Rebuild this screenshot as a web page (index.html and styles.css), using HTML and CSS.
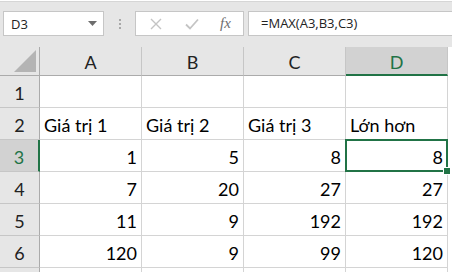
FILE: index.html
```html
<!DOCTYPE html>
<html lang="vi">
<head>
    <meta charset="UTF-8">
    <meta name="viewport" content="width=device-width, initial-scale=1.0">
    <title>MAX</title>
    <link rel="stylesheet" href="styles.css">
</head>
<body>
    <div class="toolbar">
        <div class="name-box">
            <span>D3</span>
            <svg class="drop" width="9" height="5" viewBox="0 0 9 5"><path d="M0 0h9L4.5 5z" fill="#6d6d6d"/></svg>
        </div>
        <div class="grip"><i></i><i></i><i></i></div>
        <div class="fx-box">
            <svg width="12" height="12" viewBox="0 0 12 12"><path d="M1 1l10 10M11 1L1 11" stroke="#c4c4c4" stroke-width="1.4" fill="none"/></svg>
            <svg width="14" height="12" viewBox="0 0 14 12"><path d="M1 6.5l4 4L13 1.5" stroke="#c4c4c4" stroke-width="1.8" fill="none"/></svg>
            <span class="fx">fx</span>
        </div>
        <div class="formula">=MAX(A3,B3,C3)</div>
    </div>

    <div class="sheet">
        <div class="corner"></div>
        <div class="col-head">A</div>
        <div class="col-head">B</div>
        <div class="col-head">C</div>
        <div class="col-head sel">D</div>

        <div class="row-head">1</div>
        <div class="cell"></div>
        <div class="cell"></div>
        <div class="cell"></div>
        <div class="cell"></div>

        <div class="row-head">2</div>
        <div class="cell">Giá trị 1</div>
        <div class="cell">Giá trị 2</div>
        <div class="cell">Giá trị 3</div>
        <div class="cell">Lớn hơn</div>

        <div class="row-head sel">3</div>
        <div class="cell num">1</div>
        <div class="cell num">5</div>
        <div class="cell num">8</div>
        <div class="cell num active">8</div>

        <div class="row-head">4</div>
        <div class="cell num">7</div>
        <div class="cell num">20</div>
        <div class="cell num">27</div>
        <div class="cell num">27</div>

        <div class="row-head">5</div>
        <div class="cell num">11</div>
        <div class="cell num">9</div>
        <div class="cell num">192</div>
        <div class="cell num">192</div>

        <div class="row-head">6</div>
        <div class="cell num">120</div>
        <div class="cell num">9</div>
        <div class="cell num">99</div>
        <div class="cell num">120</div>

        <div class="row-head tail"></div>
        <div class="cell tail"></div>
        <div class="cell tail"></div>
        <div class="cell tail"></div>
        <div class="cell tail"></div>
    </div>
</body>
</html>
```

FILE: styles.css
```css
body {
    margin: 0;
    background-color: #ffffff;
    overflow: hidden;
    width: 452px;
    height: 272px;
}

.toolbar {
    display: flex;
    align-items: flex-start;
    height: 46px;
    box-sizing: border-box;
    margin-top: 1px;
    padding-top: 9px;
    background-color: #e6e6e6;
    border-top: 1px solid #d6d6d6;
    font-family: 'Open Sans', 'Noto Sans', sans-serif;
    font-size: 13px;
}

.name-box {
    display: flex;
    align-items: center;
    justify-content: space-between;
    width: 101px;
    height: 25px;
    box-sizing: border-box;
    margin-left: 3px;
    padding: 0 6px 0 7px;
    background-color: #ffffff;
    border: 1px solid #c6c6c6;
    color: #222;
}

.grip {
    display: flex;
    flex-direction: column;
    align-items: center;
    justify-content: center;
    gap: 2px;
    width: 31px;
    height: 25px;
}

.grip i {
    display: block;
    width: 2px;
    height: 2px;
    background-color: #a8a8a8;
}

.fx-box {
    display: flex;
    align-items: center;
    width: 109px;
    height: 25px;
    box-sizing: border-box;
    padding-left: 14px;
    gap: 23px;
    background-color: #ffffff;
    border: 1px solid #c6c6c6;
}

.fx-box .fx {
    font-family: 'Liberation Serif', serif;
    font-style: italic;
    font-size: 15px;
    color: #6e6e6e;
    margin-left: -2px;
}

.formula {
    flex: 1;
    height: 25px;
    box-sizing: border-box;
    margin-left: 4px;
    margin-right: -4px;
    padding-left: 12px;
    line-height: 23px;
    background-color: #ffffff;
    border: 1px solid #c6c6c6;
    color: #222;
}

.sheet {
    display: grid;
    grid-template-columns: 40px repeat(4, 102px);
    grid-template-rows: 29px repeat(6, 32px) 4px;
    font-family: 'Lato', 'Liberation Sans', sans-serif;
    font-size: 18px;
    color: #000;
}

.corner {
    position: relative;
    background-color: #e6e6e6;
    border-right: 1px solid #ababab;
    border-bottom: 1px solid #ababab;
}

.corner::after {
    content: '';
    position: absolute;
    right: 3px;
    bottom: 3px;
    width: 0;
    height: 0;
    border-left: 22px solid transparent;
    border-bottom: 22px solid #b4b4b4;
}

.col-head {
    display: flex;
    align-items: flex-end;
    justify-content: center;
    padding-bottom: 2px;
    background-color: #e6e6e6;
    border-right: 1px solid #c6c6c6;
    border-bottom: 1px solid #ababab;
    color: #222;
}

.col-head.sel {
    background-color: #d2d2d2;
    border-bottom: 2px solid #217346;
    color: #217346;
    padding-bottom: 1px;
}

.row-head {
    display: flex;
    align-items: flex-end;
    justify-content: center;
    padding-bottom: 3px;
    background-color: #e6e6e6;
    border-right: 1px solid #ababab;
    border-bottom: 1px solid #c6c6c6;
    color: #222;
}

.row-head.sel {
    background-color: #d2d2d2;
    border-right: 2px solid #217346;
    color: #217346;
}

.cell {
    display: flex;
    align-items: flex-end;
    padding: 0 4px 3px 4px;
    border-right: 1px solid #d4d4d4;
    border-bottom: 1px solid #d4d4d4;
    white-space: nowrap;
}

.tail {
    padding: 0;
    border-bottom: none;
}

.num {
    justify-content: flex-end;
}

.active {
    position: relative;
}

.active::after {
    content: '';
    position: absolute;
    left: -1px;
    top: -1px;
    right: -1px;
    bottom: -1px;
    border: 2px solid #217346;
}

.active::before {
    content: '';
    position: absolute;
    right: -4px;
    bottom: -4px;
    width: 6px;
    height: 6px;
    background-color: #217346;
    border: 1px solid #ffffff;
    z-index: 1;
}
```
